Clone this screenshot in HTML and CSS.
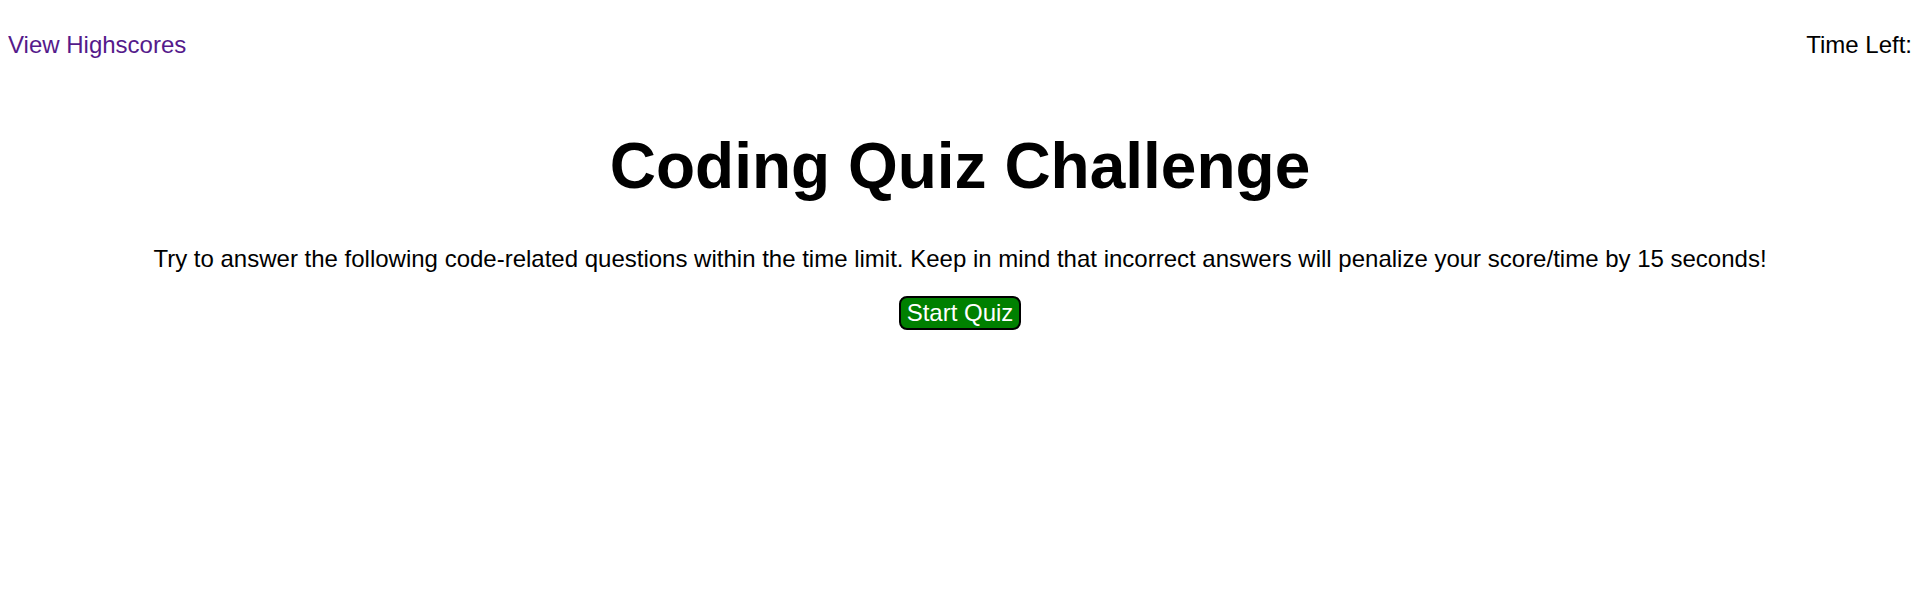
FILE: index.html
```html
<!DOCTYPE html>
<html lang="en">
<head>
<meta charset="utf-8">
<title>Coding Quiz Challenge</title>
<link rel="stylesheet" href="styles.css">
</head>
<body>
<header class="top-bar">
  <a class="highscores-link" href="#">View Highscores</a>
  <div class="timer">Time Left: <span class="time"></span></div>
</header>
<main class="intro">
  <h1 class="title">Coding Quiz Challenge</h1>
  <p class="description">Try to answer the following code-related questions within the time limit. Keep in mind that incorrect answers will penalize your score/time by 15 seconds!</p>
  <button class="start-btn" type="button">Start Quiz</button>
</main>
</body>
</html>
```
FILE: styles.css
```css
body {
  margin: 8px;
  font-family: "Liberation Sans", Arial, sans-serif;
  background: #fff;
  color: #000;
}

.top-bar {
  display: flex;
  justify-content: space-between;
  align-items: center;
  padding-top: 23px;
  font-size: 24px;
}

.highscores-link {
  color: #551a8b;
  text-decoration: none;
}

.timer {
  color: #000;
}

.intro {
  display: flex;
  flex-direction: column;
  align-items: center;
  text-align: center;
}

.title {
  font-size: 64px;
  font-weight: bold;
  margin: 70px 0 0;
  line-height: normal;
}

.description {
  font-size: 24px;
  margin: 42px 0 0;
}

.start-btn {
  margin-top: 23px;
  font-family: "Liberation Sans", Arial, sans-serif;
  font-size: 24px;
  color: #fff;
  background: #008000;
  border: 2px solid #000;
  border-radius: 8px;
  padding: 1px 6px;
  cursor: pointer;
}
```
